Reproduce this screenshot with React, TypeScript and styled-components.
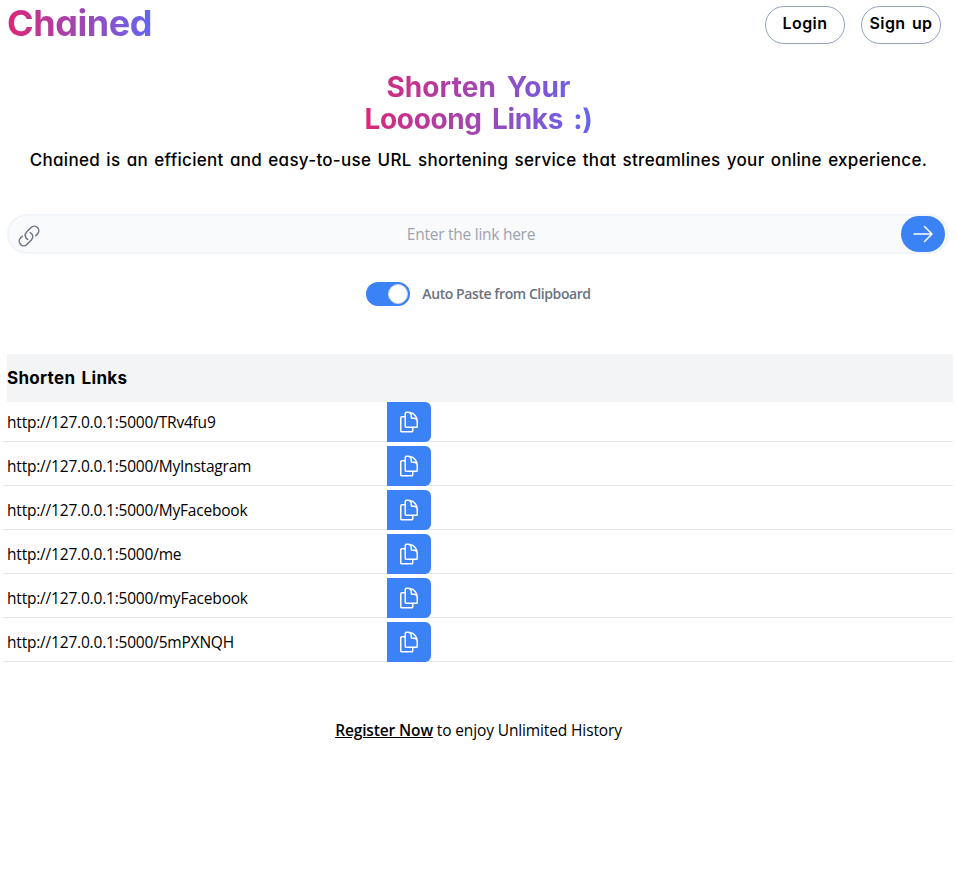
import React, { useState } from "react";
import styled, { createGlobalStyle } from "styled-components";
import { HiOutlineLink, HiOutlineArrowRight, HiOutlineDocumentDuplicate } from "react-icons/hi2";

const GlobalStyle = createGlobalStyle`
  *, *::before, *::after { box-sizing: border-box; }
  body {
    margin: 0;
    background: #fff;
    color: #000;
    font: 400 15.5px/24px "Open Sans", "Noto Sans", sans-serif;
  }
  button, input { font: inherit; }
  h1, h2, p, ul { margin: 0; padding: 0; }
`;

const display = `
  font-family: Inter, sans-serif;
  font-feature-settings: "cv11", "ss03";
`;

const gradientText = `
  color: transparent;
  background: linear-gradient(to right, #db2777, #6366f1);
  background-clip: text;
  -webkit-background-clip: text;
`;

const Page = styled.div`
  min-height: 894px;
  overflow: hidden;
`;

const Header = styled.header`
  display: flex;
  justify-content: space-between;
  align-items: flex-start;
  height: 71px;
  padding: 6px 16px 0 7px;
`;

const Logo = styled.span`
  ${display}
  ${gradientText}
  width: 145px;
  margin-top: -3px;
  font-size: 36px;
  font-weight: 700;
  line-height: 40px;
  letter-spacing: -0.45px;
  white-space: nowrap;
`;

const Actions = styled.nav`
  display: flex;
  gap: 16px;
`;

const PillButton = styled.button`
  ${display}
  width: 80px;
  height: 38px;
  padding: 0 0 4px;
  border: 1px solid #94a3b8;
  border-radius: 19px;
  background: #fff;
  color: #000;
  font-size: 16px;
  font-weight: 600;
  letter-spacing: 0.4px;
  word-spacing: 2px;
  white-space: nowrap;
`;

const Hero = styled.section`
  ${display}
  display: flex;
  flex-direction: column;
  align-items: center;
`;

const Title = styled.h1`
  ${gradientText}
  width: 232px;
  font-size: 28px;
  font-weight: 700;
  line-height: 32px;
  text-align: center;
  white-space: nowrap;
`;

const TitleLine = styled.span<{ $tracking: number }>`
  display: block;
  letter-spacing: ${(p) => p.$tracking}px;
  word-spacing: 4px;
`;

const Tagline = styled.p`
  height: 28px;
  margin-top: 11px;
  font-size: 17px;
  font-weight: 500;
  line-height: 28px;
  letter-spacing: 0.29px;
  word-spacing: 1.5px;
  white-space: nowrap;
`;

const SearchBar = styled.form`
  display: flex;
  align-items: center;
  height: 40px;
  margin: 40px 8px 0 7px;
  padding: 0 2px 0 8px;
  border: 2px solid #f1f5f9;
  border-radius: 20px;
  background: #f9fafb;

  > svg {
    flex: none;
    margin-top: 4px;
    color: #6b7280;
  }
`;

const LinkInput = styled.input`
  flex: 1;
  min-width: 0;
  height: 36px;
  padding: 0;
  border: 0;
  outline: 0;
  background: transparent;
  text-align: center;
  letter-spacing: -0.26px;

  &::placeholder { color: #9ca3af; opacity: 1; }
`;

const SubmitButton = styled.button`
  display: flex;
  align-items: center;
  justify-content: center;
  width: 44px;
  height: 36px;
  padding: 0;
  border: 0;
  border-radius: 18px;
  background: #3b82f6;
  color: #fff;
`;

const ToggleRow = styled.label`
  display: flex;
  justify-content: center;
  align-items: center;
  gap: 12px;
  height: 24px;
  margin-top: 28px;
`;

const Toggle = styled.button<{ $on: boolean }>`
  display: flex;
  justify-content: ${(p) => (p.$on ? "flex-end" : "flex-start")};
  width: 44px;
  height: 24px;
  padding: 2px;
  border: 0;
  border-radius: 12px;
  background: ${(p) => (p.$on ? "#3b82f6" : "#e5e7eb")};
`;

const Knob = styled.span`
  width: 20px;
  height: 20px;
  border: 1px solid #d1d5db;
  border-radius: 50%;
  background: #fff;
`;

const ToggleLabel = styled.span`
  color: #6b7280;
  font-size: 14px;
  font-weight: 600;
  letter-spacing: -0.42px;
  white-space: nowrap;
`;

const Links = styled.section`
  margin: 48px 4px 0 3px;
`;

const LinksTitle = styled.h2`
  ${display}
  height: 48px;
  margin-left: 4px;
  background: #f3f4f6;
  font-size: 17px;
  font-weight: 700;
  line-height: 48px;
  letter-spacing: 0.3px;
  word-spacing: 2px;
`;

const LinkList = styled.ul`
  display: grid;
  gap: 4px;
  list-style: none;
`;

const LinkRow = styled.li`
  display: grid;
  grid-template-columns: 380px 44px;
  height: 40px;
  padding-left: 4px;
  box-shadow: inset 0 -1px #e5e7eb;
`;

const LinkText = styled.span`
  line-height: 40px;
  letter-spacing: -0.2px;
  white-space: nowrap;
`;

const CopyButton = styled.button`
  display: flex;
  align-items: center;
  justify-content: center;
  padding: 0;
  border: 0;
  border-radius: 0 6px 6px 0;
  background: #3b82f6;
  color: #fff;
`;

const Footer = styled.p`
  margin-top: 56px;
  text-align: center;
  letter-spacing: -0.13px;
`;

const RegisterLink = styled.a`
  font-weight: 600;
  text-decoration: underline;
`;

const slugs = ["TRv4fu9", "MyInstagram", "MyFacebook", "me", "myFacebook", "5mPXNQH"];

export default function App() {
  const [autoPaste, setAutoPaste] = useState(true);

  return (
    <Page>
      <GlobalStyle />
      <Header>
        <Logo>Chained</Logo>
        <Actions>
          <PillButton>Login</PillButton>
          <PillButton>Sign up</PillButton>
        </Actions>
      </Header>
      <Hero>
        <Title>
          <TitleLine $tracking={0.1}>Shorten Your</TitleLine>
          <TitleLine $tracking={-0.35}>Loooong Links :)</TitleLine>
        </Title>
        <Tagline>
          Chained is an efficient and easy-to-use URL shortening service that streamlines your online experience.
        </Tagline>
      </Hero>
      <SearchBar onSubmit={(e) => e.preventDefault()}>
        <HiOutlineLink size={24} />
        <LinkInput placeholder="Enter the link here" />
        <SubmitButton aria-label="Shorten">
          <HiOutlineArrowRight size={24} />
        </SubmitButton>
      </SearchBar>
      <ToggleRow>
        <Toggle $on={autoPaste} role="switch" aria-checked={autoPaste} onClick={() => setAutoPaste(!autoPaste)}>
          <Knob />
        </Toggle>
        <ToggleLabel>Auto Paste from Clipboard</ToggleLabel>
      </ToggleRow>
      <Links>
        <LinksTitle>Shorten Links</LinksTitle>
        <LinkList>
          {slugs.map((slug) => (
            <LinkRow key={slug}>
              <LinkText>http://127.0.0.1:5000/{slug}</LinkText>
              <CopyButton aria-label="Copy">
                <HiOutlineDocumentDuplicate size={24} />
              </CopyButton>
            </LinkRow>
          ))}
        </LinkList>
      </Links>
      <Footer>
        <RegisterLink>Register Now</RegisterLink> to enjoy Unlimited History
      </Footer>
    </Page>
  );
}
